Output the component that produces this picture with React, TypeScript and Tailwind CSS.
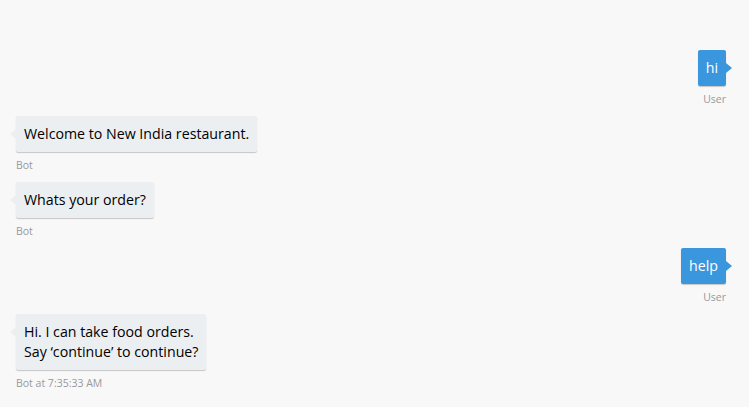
import React from "react";

type Msg = { from: "user" | "bot"; lines: string[]; label: string };

const messages: Msg[] = [
  { from: "user", lines: ["hi"], label: "User" },
  { from: "bot", lines: ["Welcome to New India restaurant."], label: "Bot" },
  { from: "bot", lines: ["Whats your order?"], label: "Bot" },
  { from: "user", lines: ["help"], label: "User" },
  {
    from: "bot",
    lines: ["Hi. I can take food orders.", "Say \u2018continue\u2019 to continue?"],
    label: "Bot at 7:35:33 AM",
  },
];

function Bubble({ msg }: { msg: Msg }) {
  const isUser = msg.from === "user";
  return (
    <div className={`flex flex-col ${isUser ? "items-end" : "items-start"}`}>
      <div
        className={`relative rounded-[2px] px-2 py-2 text-[14.2px] leading-5 shadow-[0_1px_1px_rgba(0,0,0,0.2)] ${
          isUser ? "bg-[#3a96dd] text-white" : "bg-[#eceff1] text-black"
        }`}
      >
        {msg.lines.map((l) => (
          <div key={l}>{l}</div>
        ))}
        {isUser ? (
          <span className="absolute right-[-6px] top-[13px] h-0 w-0 border-y-[5px] border-l-[6px] border-y-transparent border-l-[#3a96dd]" />
        ) : (
          <span className="absolute left-[-6px] top-[13px] h-0 w-0 border-y-[5px] border-r-[6px] border-y-transparent border-r-[#eceff1]" />
        )}
      </div>
      <div className="mt-[5px] mb-[9px] h-4 text-[10.5px] leading-4 text-[#999]">{msg.label}</div>
    </div>
  );
}

export default function App() {
  return (
    <div
      className="w-[749px] h-[407px] overflow-hidden bg-[#f8f8f8] pt-[50px] pl-4 pr-[23px] flex flex-col"
      style={{ fontFamily: '"Open Sans", "Noto Sans", sans-serif' }}
    >
      {messages.map((m, i) => (
        <Bubble key={i} msg={m} />
      ))}
    </div>
  );
}
